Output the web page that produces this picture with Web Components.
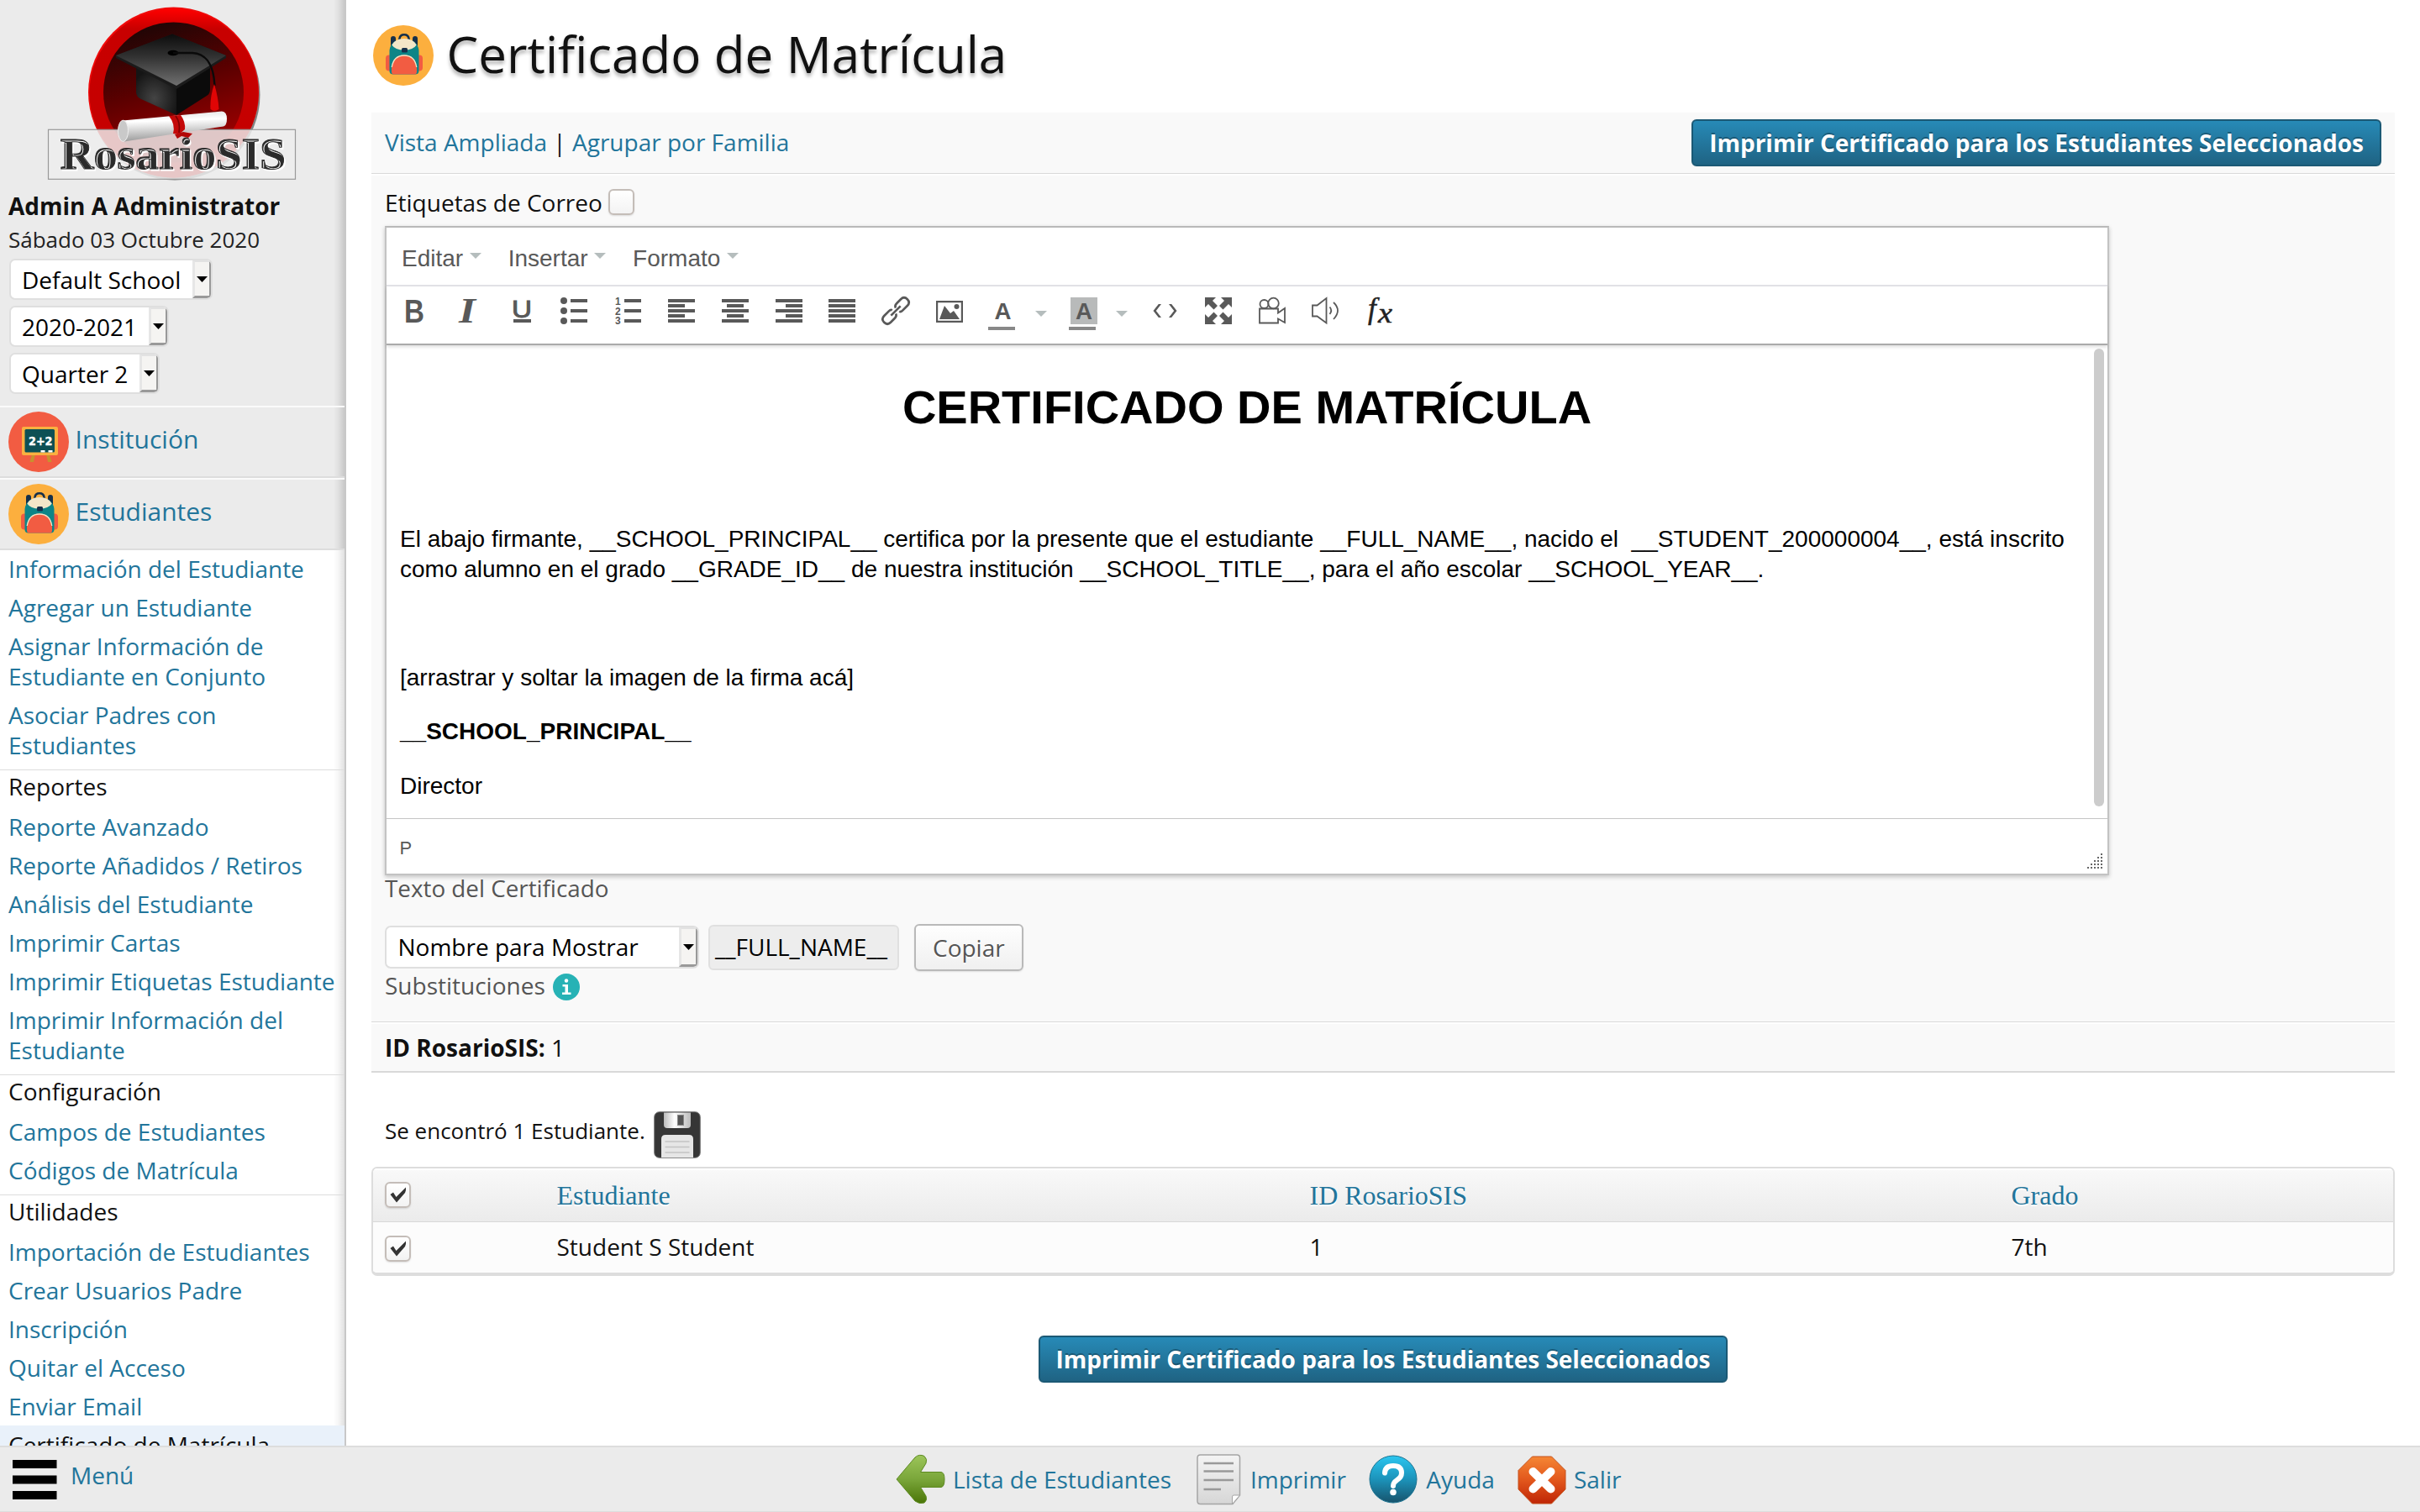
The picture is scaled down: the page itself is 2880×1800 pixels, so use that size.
<!DOCTYPE html>
<html lang="es">
<head>
<meta charset="utf-8">
<title>Certificado de Matrícula</title>
<style>
  html, body { margin: 0; height: 100%; background: #fff; overflow: hidden; }
  body { font-family: "Open Sans", "Noto Sans", sans-serif; font-size: 28px; color: #111; }
</style>
</head>
<body>
<ros-app></ros-app>
<script>
const define = (name, html) => {
  const tpl = document.createElement('template');
  tpl.innerHTML = html;
  customElements.define(name, class extends HTMLElement {
    constructor() {
      super();
      this.attachShadow({ mode: 'open' }).append(tpl.content.cloneNode(true));
    }
  });
};

/* ---------- logo ---------- */
define('ros-logo', `
<style>:host{display:block;height:216px}svg{display:block}</style>
<svg width="410" height="216" viewBox="0 0 410 216">
  <defs>
    <linearGradient id="in" x1=".3" y1="0" x2=".6" y2="1"><stop offset="0" stop-color="#1c0606"/><stop offset=".45" stop-color="#5a0000"/><stop offset="1" stop-color="#a80000"/></linearGradient>
    <linearGradient id="cap" x1="0" y1="0" x2="0" y2="1"><stop offset="0" stop-color="#0c0c0c"/><stop offset=".45" stop-color="#333"/><stop offset="1" stop-color="#707070"/></linearGradient>
    <radialGradient id="boxl" cx=".45" cy=".65" r=".6"><stop offset="0" stop-color="#444"/><stop offset="1" stop-color="#151515"/></radialGradient>
    <linearGradient id="sc" x1="0" y1="0" x2=".12" y2="1"><stop offset="0" stop-color="#ddd"/><stop offset=".35" stop-color="#fff"/><stop offset="1" stop-color="#9c9c9c"/></linearGradient>
    <linearGradient id="ring" x1="0" y1="0" x2="0" y2="1"><stop offset="0" stop-color="#f00"/><stop offset=".12" stop-color="#c80000"/><stop offset="1" stop-color="#c40000"/></linearGradient>
  </defs>
  <circle cx="208" cy="113" r="101.500" fill="#000" opacity=".45"/>
  <circle cx="206.500" cy="110" r="101.500" fill="#f00a0a"/>
  <circle cx="207" cy="111" r="100.500" fill="url(#ring)"/>
  <circle cx="206.500" cy="110" r="83.500" fill="url(#in)"/>
  <path d="M162 80L210 102V137L168 118Q162 115 162 110Z" fill="url(#boxl)"/>
  <path d="M250 80L210 102V137L246 114Q250 112 250 106Z" fill="#0b0b0b"/>
  <path d="M138 66L205 40.500L269 66V69L210 106L138 69Z" fill="#1b1b1b"/>
  <path d="M138 66L205 40.500L269 66L210 102Z" fill="url(#cap)"/>
  <ellipse cx="206" cy="63" rx="6.500" ry="3.200" fill="#000"/>
  <path d="M206 63H229C244 64 254 74 255.500 102" fill="none" stroke="#0a0a0a" stroke-width="2.400"/>
  <path d="M255 100C251 112 250 122 250.500 130Q255 134 260.500 130C260 120 258 110 255 100Z" fill="#e00505"/>
  <rect x="57.500" y="154.300" width="294" height="59" fill="#ededed" fill-opacity=".84" stroke="#999" stroke-width="1.200"/>
  <path d="M146 143.500L264 132.500Q270 133 270 141.500Q270 149 266 150.500L148 168.500Z" fill="url(#sc)"/>
  <ellipse cx="146.500" cy="155.800" rx="6" ry="12.600" fill="#c9c9c9" stroke="#eee"/>
  <path d="M201 138L215 137Q221 145 220 154L213 160L206 159Q209 148 201 138Z" fill="#c40808"/>
  <path d="M209 138Q215 146 213 158" stroke="#7d0000" stroke-width="1.600" fill="none"/>
  <path d="M208 160L218 157L229 159L224 164L216 162L211 165Z" fill="#b30808"/>
  <text x="71.500" y="201" font-family="'Liberation Serif',serif" font-weight="bold" font-size="53.500" fill="#2b2b2b" stroke="#2b2b2b" stroke-width=".9" textLength="268.500" lengthAdjust="spacingAndGlyphs" style="text-shadow:1.500px 1.500px 0 #fff">RosarioSIS</text>
</svg>`);

/* ---------- module icons ---------- */
define('icon-board', `
<style>:host{display:block;width:72px;height:72px}svg{display:block}</style>
<svg width="72" height="72" viewBox="0 0 72 72">
  <circle cx="36" cy="36" r="36" fill="#f25c42"/>
  <path d="M28 51H32L30 60H25.500Z M45 51H49L51.500 60H47Z" fill="#c8912f"/>
  <rect x="16" y="18" width="43" height="34" rx="2" fill="#fbb040"/>
  <rect x="19.500" y="21" width="35.500" height="27.500" rx="1.500" fill="#0d5055"/>
  <text x="24" y="39.500" font-family="'DejaVu Sans',sans-serif" font-weight="bold" font-size="14" fill="#fff" stroke="#fff" stroke-width=".4" textLength="28.500" lengthAdjust="spacingAndGlyphs">2+2</text>
  <path d="M38.500 46H43.500V48.500H38.500Z M47.500 46H52.500V48.500H47.500Z" fill="#fff"/>
</svg>`);
define('icon-backpack', `
<style>:host{display:block;width:72px;height:72px}svg{display:block}</style>
<svg width="72" height="72" viewBox="0 0 72 72">
  <circle cx="36" cy="36" r="36" fill="#fcaf3e"/>
  <rect x="21" y="13" width="6" height="16" rx="3" fill="#16304a"/><rect x="47" y="13" width="6" height="16" rx="3" fill="#16304a"/>
  <path d="M31.500 18V16Q32 11.300 37 11.300Q42 11.300 42.500 16V18" fill="none" stroke="#16304a" stroke-width="2.600"/>
  <rect x="15" y="35.500" width="44" height="19" rx="4" fill="#f25c42"/>
  <path d="M19.500 55V30Q21 17 37 17Q53 17 54.500 30V55Q54 58.600 50 58.600H24Q20 58.600 19.500 55Z" fill="#0d8587"/>
  <path d="M22.300 23.500Q26 16 37 16Q48 16 51.700 23.500Q48 29.500 37 29.500Q26 29.500 22.300 23.500Z" fill="#f3e6c8"/>
  <rect x="34" y="27" width="7" height="5.500" rx="1.500" fill="#16304a"/>
  <path d="M22 55.500V51Q24 35.500 37 35.500Q50 35.500 52 51V55.500Q52 58.600 49 58.600H25Q22 58.600 22 55.500Z" fill="#f25c42"/>
  <path d="M22.200 50Q24.500 36 37 36Q49.500 36 51.800 50" fill="none" stroke="#f3e6c8" stroke-width="1.300"/>
</svg>`);

/* ---------- form controls ---------- */
define('ros-select', `
<style>
  :host{display:flex;width:max-content;height:49px;box-sizing:border-box;border:2px solid #dfdfdf;border-radius:7px;background:#fff;color:#000;overflow:hidden}
  .t{flex:1;line-height:46px;padding:0 14px 0 13.500px;white-space:nowrap}
  .b{width:17px;display:flex;align-items:center;justify-content:center;background:#f5f4f2;border:solid;border-width:3px;border-color:#e2e2e2 #999 #999 #e6e6e6;margin:-1px -1px 0 0}
  svg{display:block}
</style>
<div class="t"><slot></slot></div><div class="b"><svg width="13" height="7"><path d="M0 0H13L6.500 7Z" fill="#000"/></svg></div>`);
define('ros-check', `
<style>
  :host{display:flex;align-items:center;justify-content:center;width:31px;height:31px;box-sizing:border-box;border:2px solid #c4bdb8;border-radius:6px;background:linear-gradient(#fff,#f3f3f3);box-shadow:0 1px 2px rgba(0,0,0,.12)}
  svg{display:none}
  :host([checked]) svg{display:block}
</style>
<svg width="23" height="23" viewBox="0 0 23 23"><path d="M2.500 11L6 8.500L9.500 14L21 2.500Q21.500 5.500 20 9L10 20.500Z" fill="#333"/></svg>`);
define('ros-button', `
<style>
  :host{display:block;box-sizing:border-box;height:56px;line-height:52px;padding:0 19px;border:2px solid #1b5975;border-radius:6px;background:linear-gradient(#278ab7,#1f6383);color:#fff;font-weight:bold;white-space:nowrap;text-shadow:0 -2px 0 rgba(0,0,0,.28);box-shadow:0 0 1px rgba(0,0,0,.25)}
  :host([plain]){padding:0 20px;border-color:#b9b9b9;background:linear-gradient(#fefefe,#f0f0f0);color:#555;font-weight:normal;text-shadow:0 2px 0 #fff;box-shadow:0 1px 2px rgba(0,0,0,.1)}
</style><slot></slot>`);

/* ---------- side menu ---------- */
define('menu-top', `
<style>
  :host{display:flex;gap:7.500px;height:82px;padding-left:10px;border-top:2px solid #fafafa;border-bottom:2px solid #ddd;background:var(--edge),#ebebeb;color:#22759b;font-size:30px;line-height:75px}
  .i{padding-top:5px}
</style><div class="i"><slot name="icon"></slot></div><slot></slot>`);
define('menu-head', `
<style>:host{display:block;border-top:1px solid #ddd;margin-top:6px;padding:1px 10px 7px;line-height:36px;color:#111}</style><slot></slot>`);
define('menu-link', `
<style>:host{display:block;padding:5px 3px 5px 10px;line-height:36px;color:#22759b}
:host([active]){background:#e9f1fa;color:#111}</style><slot></slot>`);
define('side-menu', `
<style>
  :host{display:block;width:410px;flex:none;border-right:2px solid #c8c8c8;overflow:hidden;
    --edge:linear-gradient(90deg,rgba(0,0,0,0) 397px,rgba(0,0,0,.05) 403px,rgba(0,0,0,.15) 410px);
    background:linear-gradient(90deg,rgba(0,0,0,0) 397px,rgba(0,0,0,.04) 403px,rgba(0,0,0,.12) 410px),#fff}
  .u{height:483px;background:var(--edge),#ebebeb}
  .n{padding:10px 0 0 10px;font-weight:bold;line-height:38px}
  .d{padding:3px 0 5px 10px;font-size:26px;line-height:36px;color:#222}
  .s{display:flex;flex-direction:column;gap:7px;padding-left:10.500px}
</style>
<div class="u">
  <ros-logo></ros-logo>
  <div class="n">Admin A Administrator</div>
  <div class="d">Sábado 03 Octubre 2020</div>
  <div class="s"><ros-select>Default School</ros-select><ros-select>2020-2021</ros-select><ros-select>Quarter 2</ros-select></div>
</div>
<menu-top><icon-board slot="icon"></icon-board>Institución</menu-top>
<menu-top><icon-backpack slot="icon"></icon-backpack>Estudiantes</menu-top>
<menu-link style="margin-top:-1px">Información del Estudiante</menu-link>
<menu-link>Agregar un Estudiante</menu-link>
<menu-link>Asignar Información de Estudiante en Conjunto</menu-link>
<menu-link>Asociar Padres con Estudiantes</menu-link>
<menu-head>Reportes</menu-head>
<menu-link>Reporte Avanzado</menu-link>
<menu-link>Reporte Añadidos / Retiros</menu-link>
<menu-link>Análisis del Estudiante</menu-link>
<menu-link>Imprimir Cartas</menu-link>
<menu-link>Imprimir Etiquetas Estudiante</menu-link>
<menu-link>Imprimir Información del Estudiante</menu-link>
<menu-head>Configuración</menu-head>
<menu-link>Campos de Estudiantes</menu-link>
<menu-link>Códigos de Matrícula</menu-link>
<menu-head>Utilidades</menu-head>
<menu-link>Importación de Estudiantes</menu-link>
<menu-link>Crear Usuarios Padre</menu-link>
<menu-link>Inscripción</menu-link>
<menu-link>Quitar el Acceso</menu-link>
<menu-link>Enviar Email</menu-link>
<menu-link active>Certificado de Matrícula</menu-link>`);

/* ---------- rich text editor ---------- */
define('editor-menu', `
<style>:host{display:flex;align-items:center;gap:7.500px}svg{display:block;margin-top:-1px}span{line-height:73px;height:68px}</style>
<span><slot></slot></span><svg width="14" height="7"><path d="M0 0H14L7 7Z" fill="#b5bdbd"/></svg>`);

const G = '#595959';
const bars = rows => rows.map(([x, w], i) => `<rect x="${x}" y="${2 + i * 6}" width="${w}" height="4"/>`).join('');
const glyphs = {
  bold: `<text x="5" y="30" font-family="'Liberation Sans'" font-weight="bold" font-size="39" textLength="24" lengthAdjust="spacingAndGlyphs">B</text>`,
  italic: `<text x="6" y="30" font-family="'Liberation Serif'" font-style="italic" font-weight="bold" font-size="42" textLength="20" lengthAdjust="spacingAndGlyphs">I</text>`,
  underline: `<text x="5" y="23.500" font-family="'Liberation Sans'" font-size="30" textLength="24" lengthAdjust="spacingAndGlyphs" stroke="${G}" stroke-width="1">U</text><rect x="7" y="26" width="21" height="4"/>`,
  bullist: `<circle cx="4" cy="4" r="4"/><circle cx="4" cy="16" r="4"/><circle cx="4" cy="28" r="4"/><path d="M12 2H32V6H12Z M12 14H32V18H12Z M12 26H32V30H12Z"/>`,
  numlist: `<g font-family="'Liberation Sans'" font-weight="bold" font-size="12"><text x="1" y="8.500">1</text><text x="1" y="20.500">2</text><text x="1" y="32">3</text></g><path d="M12 2H32V6H12Z M12 14H32V18H12Z M12 26H32V30H12Z"/>`,
  left: bars([[0, 32], [0, 20], [0, 32], [0, 20], [0, 32]]),
  center: bars([[0, 32], [6, 20], [0, 32], [6, 20], [0, 32]]),
  right: bars([[0, 32], [12, 20], [0, 32], [12, 20], [0, 32]]),
  full: bars([[0, 32], [0, 32], [0, 32], [0, 32], [0, 32]]),
  link: `<g fill="none" stroke="${G}" stroke-width="2.700" transform="rotate(-45 16 16)"><path d="M13.500 12.500Q13 10.500 10 10.500H2Q-3.500 10.500 -3.500 16Q-3.500 21.500 2 21.500H8Q13 21.500 13.500 18.500"/><path d="M18.500 19.500Q19 21.500 22 21.500H30Q35.500 21.500 35.500 16Q35.500 10.500 30 10.500H24Q19 10.500 18.500 13.500"/><path d="M8 16H24"/></g>`,
  image: `<path fill-rule="evenodd" d="M0 4H32V30H0Z M2.200 6.200V27.800H29.800V6.200Z"/><path d="M4 26L10 10L17 19L21 16L28 26Z"/><circle cx="24.500" cy="11" r="3"/>`,
  fore: `<text x="7.500" y="26" font-family="'Liberation Sans'" font-weight="bold" font-size="28" textLength="20" lengthAdjust="spacingAndGlyphs">A</text><rect x="0" y="35" width="32" height="4" fill="#888"/>`,
  back: `<rect x="2" y="0" width="32" height="32" fill="#b8baba"/><text x="8" y="26" font-family="'Liberation Sans'" font-weight="bold" font-size="28" textLength="20" lengthAdjust="spacingAndGlyphs">A</text><rect x="0" y="35" width="32" height="4" fill="#888"/>`,
  code: `<path d="M12 8H8.800L2.500 16L8.800 24H12L5.800 16Z M21 8H24.200L30.500 16L24.200 24H21L27.200 16Z"/>`,
  expand: `<path id="q" d="M0 0H13L9 4L15 10L10.500 14.500L4 8L0 12Z"/><use href="#q" transform="translate(32 0) scale(-1 1)"/><use href="#q" transform="translate(0 32) scale(1 -1)"/><use href="#q" transform="translate(32 32) scale(-1 -1)"/>`,
  video: `<g fill="none" stroke="${G}" stroke-width="1.800"><circle cx="6.500" cy="8" r="5"/><circle cx="17.500" cy="7" r="6.300"/><path d="M1 13.500H23V18.500L31 13V30L23 25.500V30.500H1Z"/></g>`,
  audio: `<g fill="none" stroke="${G}" stroke-width="1.800"><path d="M1 9.500H6.500L17.500 1V30.500L6.500 22.500H1Z"/><path d="M21.500 11.500Q25 15.500 21.500 20"/><path d="M26 6Q36 15.500 26 26"/></g>`,
  formula: `<g font-family="'Liberation Serif'" font-style="italic" fill="#222" stroke="#222" stroke-width=".5"><text x="3" y="25" font-size="35">f</text><text x="15" y="30" font-size="34" textLength="17" lengthAdjust="spacingAndGlyphs">x</text></g>`
};
customElements.define('tool-icon', class extends HTMLElement {
  connectedCallback() {
    const root = this.shadowRoot || this.attachShadow({ mode: 'open' });
    root.innerHTML = `<style>:host{display:block;width:32px;height:32px}svg{display:block;overflow:visible}</style>
      <svg width="32" height="32" viewBox="0 0 32 32" fill="${G}">${glyphs[this.getAttribute('name')]}</svg>`;
  }
});
define('tool-caret', `<style>:host{display:block;width:14px;padding-top:16px}svg{display:block}</style><svg width="14" height="7"><path d="M0 0H14L7 7Z" fill="#b5bdbd"/></svg>`);

define('rich-editor', `
<style>
  :host{display:block;box-sizing:border-box;width:2052px;height:773px;border:2px solid #c3c3c3;border-top-color:#b9b9b9;background:#fff;box-shadow:0 2px 5px rgba(0,0,0,.22);font-family:"Liberation Sans",Arial,sans-serif}
  .m{display:flex;gap:32px;height:68px;padding-left:18px;border-bottom:2px solid #e3e3e8;color:#595959}
  .t{display:flex;height:55px;padding:13px 0 0 16px;gap:31.800px;border-bottom:2px solid #aaa;box-shadow:0 2px 4px rgba(0,0,0,.14)}
  .g{display:flex;gap:24px}
  .w{display:flex;height:563px;justify-content:space-between}
  .doc{width:2016px;padding:38px 0 0 16px;color:#000;line-height:36.400px;white-space:nowrap}
  h1{margin:0 0 37.500px;font-size:56px;line-height:72.800px;text-align:center}
  p{margin:0 0 28px;min-height:36.400px}
  .r{width:12px;height:545px;margin:4px 4px 0 0;border-radius:6px;background:#ccc}
  .s{display:flex;justify-content:space-between;height:65px;border-top:1px solid #c5c5c5;padding:0 5px 0 15.500px;font-size:22px;line-height:69px;color:#595959}
  .s svg{display:block;margin-top:41px}
</style>
<div class="m"><editor-menu>Editar</editor-menu><editor-menu>Insertar</editor-menu><editor-menu>Formato</editor-menu></div>
<div class="t">
  <tool-icon name="bold"></tool-icon><tool-icon name="italic"></tool-icon><tool-icon name="underline"></tool-icon><tool-icon name="bullist"></tool-icon><tool-icon name="numlist"></tool-icon><tool-icon name="left"></tool-icon><tool-icon name="center"></tool-icon><tool-icon name="right"></tool-icon><tool-icon name="full"></tool-icon><tool-icon name="link"></tool-icon><tool-icon name="image"></tool-icon>
  <div class="g" style="margin-left:-1.800px"><tool-icon name="fore"></tool-icon><tool-caret></tool-caret></div>
  <div class="g" style="margin-left:-5.800px"><tool-icon name="back"></tool-icon><tool-caret></tool-caret></div>
  <tool-icon name="code" style="margin-left:-3.800px"></tool-icon><tool-icon name="expand"></tool-icon><tool-icon name="video"></tool-icon><tool-icon name="audio"></tool-icon><tool-icon name="formula"></tool-icon>
</div>
<div class="w">
  <div class="doc">
    <h1>CERTIFICADO DE MATRÍCULA</h1>
    <p></p>
    <p>El abajo firmante, __SCHOOL_PRINCIPAL__ certifica por la presente que el estudiante __FULL_NAME__, nacido el&nbsp; __STUDENT_200000004__, está inscrito<br>como alumno en el grado __GRADE_ID__ de nuestra institución __SCHOOL_TITLE__, para el año escolar __SCHOOL_YEAR__.</p>
    <p></p>
    <p>[arrastrar y soltar la imagen de la firma acá]</p>
    <p><b>__SCHOOL_PRINCIPAL__</b></p>
    <p>Director</p>
  </div>
  <div class="r"></div>
</div>
<div class="s"><span>P</span>
  <svg width="19" height="19" fill="#666"><path d="M16 0h2v2h-2z M12 4h2v2h-2z M16 4h2v2h-2z M8 8h2v2h-2z M12 8h2v2h-2z M16 8h2v2h-2z M4 12h2v2h-2z M8 12h2v2h-2z M12 12h2v2h-2z M16 12h2v2h-2z M0 16h2v2h-2z M4 16h2v2h-2z M8 16h2v2h-2z M12 16h2v2h-2z M16 16h2v2h-2z"/></svg>
</div>`);

/* ---------- result list ---------- */
define('student-table', `
<style>
  :host{display:block;box-sizing:border-box;height:130px;border:2px solid #ddd;border-bottom-width:4px;border-radius:7px;overflow:hidden}
  .r{display:grid;grid-template-columns:205px 895px 836px 1fr}
  .h{height:63px;border-bottom:1px solid #d8d8d8;background:linear-gradient(#f9f9f9,#ebebeb);box-shadow:inset 0 2px 0 #fff;font:32px/64px "Liberation Serif",serif;color:#22759b;text-shadow:0 2px 0 #fff}
  .b{height:60px;line-height:58px;background:#fcfcfc}
  .r>*{padding-left:13.500px}
  .r>:nth-child(3){padding-left:14.500px}
  .h .c{padding-top:16px}.b .c{padding-top:16px}
</style>
<div class="r h"><div class="c"><ros-check checked></ros-check></div><span>Estudiante</span><span>ID RosarioSIS</span><span>Grado</span></div>
<div class="r b"><div class="c"><ros-check checked></ros-check></div><span>Student S Student</span><span>1</span><span>7th</span></div>`);

/* ---------- footer ---------- */
define('foot-item', `
<style>:host{display:flex;gap:6px;height:76px;line-height:76px;color:#22759b}::slotted(svg){display:block;margin-top:6px;flex:none}</style>
<slot name="icon"></slot><span><slot></slot></span>`);
define('app-footer', `
<style>
  :host{display:flex;box-sizing:border-box;height:79px;border-top:2px solid #ddd;border-bottom:1px solid #ddd;background:#ebebeb;color:#22759b}
  .menu{display:flex;gap:16px;width:1048px;padding-left:15px;line-height:66px}
  .menu svg{display:block;margin-top:15px}
  .i{display:flex;gap:25px}
</style>
<div class="menu"><svg width="53" height="48"><path d="M0 0H52.500V10H0Z M0 18.500H52.500V28.500H0Z M0 37H52.500V47H0Z"/></svg>Menú</div>
<div class="i">
  <foot-item style="gap:7px"><svg slot="icon" width="64" height="64" viewBox="0 0 64 64"><defs><linearGradient id="a" x1="0" y1="0" x2="0" y2="1"><stop offset="0" stop-color="#9cc55a"/><stop offset=".5" stop-color="#7aa63a"/><stop offset="1" stop-color="#4a7507"/></linearGradient></defs>
    <path d="M4 32L26 6Q31 1.500 37 4.500Q41 8 39 13L32.500 23.500H57Q61 24 61 32Q61 41 57 41.500H32.500L39 52Q41 57 37 60Q31 62 26 58Z" fill="url(#a)" stroke="#5d8a22" stroke-width="1"/></svg>Lista de Estudiantes</foot-item>
  <foot-item style="margin-left:-1px"><svg slot="icon" width="64" height="64" viewBox="0 0 64 64"><defs><linearGradient id="p" x1="0" y1="0" x2="0" y2="1"><stop offset="0" stop-color="#f4f4f4"/><stop offset="1" stop-color="#d6d6d6"/></linearGradient></defs>
    <path d="M7 6.500Q7 3 10.500 3H54Q57.500 3 57.500 6.500V51L49 61.500H10.500Q7 61.500 7 58Z" fill="url(#p)" stroke="#a5a5a5" stroke-width="1.500"/><path d="M14.500 13H50 M14.500 22.500H50 M14.500 33H50 M14.500 44H35" stroke="#999" stroke-width="2.600"/><path d="M57.500 51H50.500Q48.500 51 48.500 53V61.500Z" fill="#fff" stroke="#a5a5a5"/></svg>Imprimir</foot-item>
  <foot-item style="margin-left:-1px;gap:7.500px"><svg slot="icon" width="64" height="64" viewBox="0 0 64 64"><defs><linearGradient id="h" x1="0" y1="0" x2="0" y2="1"><stop offset="0" stop-color="#2bc6f0"/><stop offset=".5" stop-color="#1c93ba"/><stop offset="1" stop-color="#17536c"/></linearGradient></defs>
    <circle cx="32" cy="32" r="28" fill="url(#h)" stroke="#1c7391" stroke-width="1"/><path d="M22 24.500Q22.500 16 32 16Q42 16 42 24.500Q42 29.500 36.500 33Q32 36 32 40" fill="none" stroke="#fff" stroke-width="6" stroke-linecap="round"/><circle cx="32" cy="47.500" r="3.800" fill="#fff"/></svg>Ayuda</foot-item>
  <foot-item style="margin-left:-1px"><svg slot="icon" width="64" height="64" viewBox="0 0 64 64"><defs><linearGradient id="x" x1="0" y1="0" x2="0" y2="1"><stop offset="0" stop-color="#f58634"/><stop offset=".5" stop-color="#e2571c"/><stop offset="1" stop-color="#bf2506"/></linearGradient></defs>
    <path d="M20.500 5H43.500L60 21.500V44L43.500 61H20.500L4 44V21.500Z" fill="url(#x)" stroke="#c4511c" stroke-width="1" stroke-linejoin="round"/><path d="M21.500 23L42.500 43.500 M42.500 23L21.500 43.500" stroke="#fff" stroke-width="10" stroke-linecap="round"/></svg>Salir</foot-item>
</div>`);

/* ---------- page ---------- */
define('head-band', `
<style>:host{display:block;background:#f9f9f9;border-bottom:1px solid #d9d9d9;box-shadow:inset 0 2px 0 #fff}</style><slot></slot>`);
define('ros-app', `
<style>
  :host{display:flex;flex-direction:column;width:2880px;height:1800px}
  .top{display:flex;height:1721px;overflow:hidden}
  main{flex:1;padding:0 30px}
  .title{display:flex;height:134px;gap:15.500px;padding-left:2px;box-sizing:border-box}
  .title icon-backpack{margin-top:30px}
  h1{margin:14px 0 0;font-size:60px;line-height:100px;font-weight:normal;text-shadow:0 4px 4px rgba(0,0,0,.3)}
  a{color:#22759b}
  .one{display:flex;justify-content:space-between;height:72px;padding:0 16px;line-height:70px}
  .one ros-button{margin-top:8px}
  .two{padding:14px 16px 0;height:995px}
  .lab{display:flex;gap:7px;height:48px;line-height:40px}
  .lab ros-check{margin-top:4px}
  .cap{color:#555;height:30px;line-height:31px;font-size:27.800px}
  .sub{display:flex;margin-top:28px;height:56px}
  .sub ros-select{width:374px;margin-top:2px;height:51px}
  .code{box-sizing:border-box;width:227px;height:54px;margin:1px 18px 0 11px;border:2px solid #e0e0e0;border-radius:6px;background:#ededed;color:#000;line-height:49px;padding-left:6px}
  .info{display:flex;gap:9px;color:#555;line-height:36px;margin-top:-1px}
  .info svg{display:block;margin-top:4px}
  .id{height:47px;line-height:38px;padding:11px 16px 0}
  .found{display:flex;gap:10.500px;margin:46px 0 10px;padding-left:16px;height:56px;font-size:26px;line-height:46px}
  .found svg{display:block}
  .last{display:flex;justify-content:center;margin-top:71px}
</style>
<div class="top">
  <side-menu></side-menu>
  <main>
    <div class="title"><icon-backpack></icon-backpack><h1>Certificado de Matrícula</h1></div>
    <head-band style="box-shadow:none"><div class="one"><div><a>Vista Ampliada</a> | <a>Agrupar por Familia</a></div><ros-button>Imprimir Certificado para los Estudiantes Seleccionados</ros-button></div></head-band>
    <head-band><div class="two">
      <div class="lab">Etiquetas de Correo<ros-check></ros-check></div>
      <rich-editor></rich-editor>
      <div class="cap">Texto del Certificado</div>
      <div class="sub"><ros-select>Nombre para Mostrar</ros-select><div class="code">__FULL_NAME__</div><ros-button plain>Copiar</ros-button></div>
      <div class="info">Substituciones<svg width="32" height="32" viewBox="0 0 32 32"><circle cx="16" cy="16" r="16" fill="#27b2b5"/><circle cx="16" cy="8.500" r="2.200" fill="#fff"/><path d="M11.500 13H18V22.500H21.500V25H11V22.500H14.500V15.500H11.500Z" fill="#fff"/></svg></div>
    </div></head-band>
    <head-band style="border-bottom-width:2px"><div class="id"><b>ID RosarioSIS:</b> 1</div></head-band>
    <div class="found">Se encontró 1 Estudiante.<svg width="56" height="56" viewBox="0 0 56 56"><defs><linearGradient id="m" x1="0" y1="0" x2="1" y2="0"><stop offset="0" stop-color="#bbb"/><stop offset=".4" stop-color="#fff"/><stop offset="1" stop-color="#bbb"/></linearGradient></defs>
      <rect x=".7" y=".7" width="54.600" height="54.600" rx="6" fill="#363636" stroke="#777"/><path d="M12 1.500H44V16Q44 20 40 20H16Q12 20 12 16Z" fill="url(#m)"/><rect x="28.500" y="4.500" width="7" height="12" fill="#555" stroke="#888"/><path d="M9 55V33Q9 28 14 28H42Q47 28 47 33V55Z" fill="#e6e6e6"/><path d="M13.500 36H42.500 M13.500 42.500H42.500 M13.500 49H42.500" stroke="#c4c4c4" stroke-width="1.500"/></svg></div>
    <student-table></student-table>
    <div class="last"><ros-button>Imprimir Certificado para los Estudiantes Seleccionados</ros-button></div>
  </main>
</div>
<app-footer></app-footer>`);
</script>
</body>
</html>
